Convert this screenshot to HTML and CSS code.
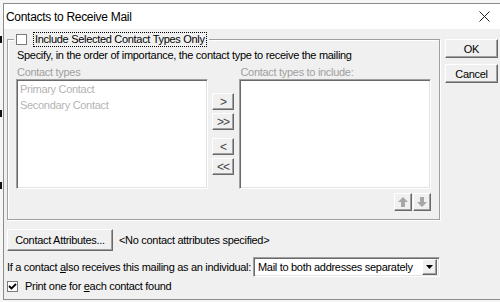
FILE: index.html
```html
<!DOCTYPE html>
<html lang="en">
<head>
    <meta charset="UTF-8">
    <title>Contacts to Receive Mail</title>
    <link rel="stylesheet" href="styles.css">
</head>
<body>
    <div class="desk">
        <div class="edge"><i></i><i></i><i></i></div>
        <div class="window">
            <div class="titlebar">
                <span>Contacts to Receive Mail</span>
                <svg class="close" width="11" height="11" viewBox="0 0 11 11"><path d="M0.5 0.5 L10.5 10.5 M10.5 0.5 L0.5 10.5" stroke="#222" stroke-width="1" fill="none"/></svg>
            </div>
            <div class="client">
                <div class="main">
                    <div class="group">
                        <div class="legend">
                            <span class="check"></span>
                            <span class="focus">Include Selected Contact Types Only</span>
                        </div>
                        <p class="hint">Specify, in the order of importance, the contact type to receive the mailing</p>
                        <div class="lists">
                            <div class="col">
                                <div class="dim-label">Contact types</div>
                                <div class="listbox">
                                    <div class="item">Primary Contact</div>
                                    <div class="item">Secondary Contact</div>
                                </div>
                            </div>
                            <div class="movers">
                                <button class="btn mover">&gt;</button>
                                <button class="btn mover">&gt;&gt;</button>
                                <button class="btn mover gap">&lt;</button>
                                <button class="btn mover">&lt;&lt;</button>
                            </div>
                            <div class="col">
                                <div class="dim-label">Contact types to include:</div>
                                <div class="listbox"></div>
                            </div>
                        </div>
                        <div class="order">
                            <button class="btn arrow">
                                <svg width="12" height="12" viewBox="0 0 12 12"><path d="M6 1 L11 6 L8 6 L8 11 L4 11 L4 6 L1 6 Z" fill="#a6a6a6"/></svg>
                            </button>
                            <button class="btn arrow">
                                <svg width="12" height="12" viewBox="0 0 12 12"><path d="M6 11 L11 6 L8 6 L8 1 L4 1 L4 6 L1 6 Z" fill="#a6a6a6"/></svg>
                            </button>
                        </div>
                    </div>
                    <div class="row attr-row">
                        <button class="btn attr">Contact Attributes...</button>
                        <span class="note">&lt;No contact attributes specified&gt;</span>
                    </div>
                    <div class="row ind-row">
                        <span>If a contact <u>a</u>lso receives this mailing as an individual:</span>
                        <div class="select">
                            <span>Mail to both addresses separately</span>
                            <span class="drop">
                                <svg width="7" height="4" viewBox="0 0 7 4"><path d="M0 0 L7 0 L3.5 4 Z" fill="#000"/></svg>
                            </span>
                        </div>
                    </div>
                    <div class="row print-row">
                        <span class="check checked">
                            <svg width="9" height="9" viewBox="0 0 9 9"><path d="M1 4 L3.5 6.5 L8 2" stroke="#000" stroke-width="1.8" fill="none"/></svg>
                        </span>
                        <span>Print one for <u>e</u>ach contact found</span>
                    </div>
                </div>
                <div class="side">
                    <button class="btn side-btn">OK</button>
                    <button class="btn side-btn">Cancel</button>
                </div>
            </div>
        </div>
    </div>
</body>
</html>
```

FILE: styles.css
```css
* {
    box-sizing: border-box;
}
body {
    margin: 0;
    background-color: #f6f6f6;
    font-family: "Liberation Sans", Arial, sans-serif;
    font-size: 11px;
    letter-spacing: -0.3px;
    white-space: nowrap;
    color: #000;
}
.desk {
    display: flex;
    height: 302px;
    overflow: hidden;
}
.edge {
    width: 3px;
    flex: none;
    display: flex;
    flex-direction: column;
}
.edge i {
    display: block;
    width: 2px;
    height: 7px;
    background-color: #111;
}
.edge i:nth-child(1) {
    margin-top: 36px;
}
.edge i:nth-child(2) {
    margin-top: 67px;
}
.edge i:nth-child(3) {
    margin-top: 65px;
}
.window {
    flex: none;
    width: 497px;
    height: 297px;
    margin-top: 3px;
    border: 1px solid #8c8c8c;
    border-right: none;
    background-color: #f0f0f0;
    display: flex;
    flex-direction: column;
}
.titlebar {
    height: 25px;
    background-color: #fff;
    display: flex;
    align-items: center;
    justify-content: space-between;
    padding: 0 10px 0 2px;
    font-size: 12px;
    letter-spacing: -0.3px;
}
.client {
    flex: 1;
    display: flex;
    gap: 5px;
    padding: 10px 0 0 3px;
}
.main {
    width: 433px;
    display: flex;
    flex-direction: column;
}
.side {
    width: 53px;
    display: flex;
    flex-direction: column;
    gap: 6px;
}

/* classic 3d button */
.btn {
    font-family: inherit;
    font-size: 11px;
    letter-spacing: inherit;
    color: #000;
    background-color: #f0f0f0;
    border: 1px solid;
    border-color: #fff #696969 #696969 #fff;
    box-shadow: inset -1px -1px #a0a0a0;
    padding: 0;
    margin: 0;
    display: flex;
    align-items: center;
    justify-content: center;
}
.side-btn {
    height: 19px;
    width: 53px;
}

.group {
    border: 1px solid #a0a0a0;
    box-shadow: inset 1px 1px #fff, 1px 1px #fff;
    padding: 0 8px 8px 8px;
}
.legend {
    display: flex;
    align-items: center;
    width: fit-content;
    height: 15px;
    margin: -8px 0 0 -2px;
    padding: 0 2px;
    background-color: #f0f0f0;
}
.check {
    width: 11px;
    height: 11px;
    flex: none;
    background-color: #fff;
    border: 1px solid #7a7a7a;
    display: flex;
    align-items: center;
    justify-content: center;
}
.focus {
    margin-left: 6px;
    padding: 0 1px;
    line-height: 13px;
    border: 1px dotted #000;
}
.hint {
    margin: 2px 0 0 1px;
    line-height: 13px;
}
.lists {
    display: flex;
    margin-top: 4px;
}
.col {
    width: 192px;
    display: flex;
    flex-direction: column;
}
.dim-label {
    line-height: 13px;
    color: #a0a0a0;
    padding-left: 1px;
}
.listbox {
    height: 110px;
    background-color: #fff;
    border: 1px solid;
    border-color: #a0a0a0 #fff #fff #a0a0a0;
    box-shadow: inset 1px 1px #696969, inset -1px -1px #e3e3e3;
    padding: 1px 2px;
}
.item {
    line-height: 16px;
    color: #b4b4b4;
    padding-left: 1px;
}
.movers {
    width: 23px;
    margin: 0 5px 0 4px;
    padding-top: 27px;
    display: flex;
    flex-direction: column;
    gap: 3px;
}
.mover {
    height: 17px;
    font-size: 12px;
    letter-spacing: -1px;
    color: #444;
}
.mover.gap {
    margin-top: 5px;
}
.order {
    display: flex;
    justify-content: flex-end;
    gap: 1px;
    margin-top: 4px;
}
.arrow {
    width: 18px;
    height: 18px;
}

.row {
    display: flex;
    align-items: center;
}
.attr-row {
    margin-top: 9px;
    gap: 6px;
}
.attr {
    width: 106px;
    height: 22px;
}
.ind-row {
    margin-top: 6px;
    height: 20px;
}
.select {
    margin-left: auto;
    width: 187px;
    height: 20px;
    background-color: #fff;
    border: 1px solid;
    border-color: #a0a0a0 #fff #fff #a0a0a0;
    box-shadow: inset 1px 1px #696969, inset -1px -1px #e3e3e3;
    display: flex;
    align-items: center;
    justify-content: space-between;
    padding: 2px 2px 2px 4px;
}
.drop {
    width: 15px;
    height: 16px;
    background-color: #f0f0f0;
    border: 1px solid;
    border-color: #fff #696969 #696969 #fff;
    box-shadow: inset -1px -1px #a0a0a0;
    display: flex;
    align-items: center;
    justify-content: center;
}
.print-row {
    margin-top: 3px;
    gap: 7px;
}
```
